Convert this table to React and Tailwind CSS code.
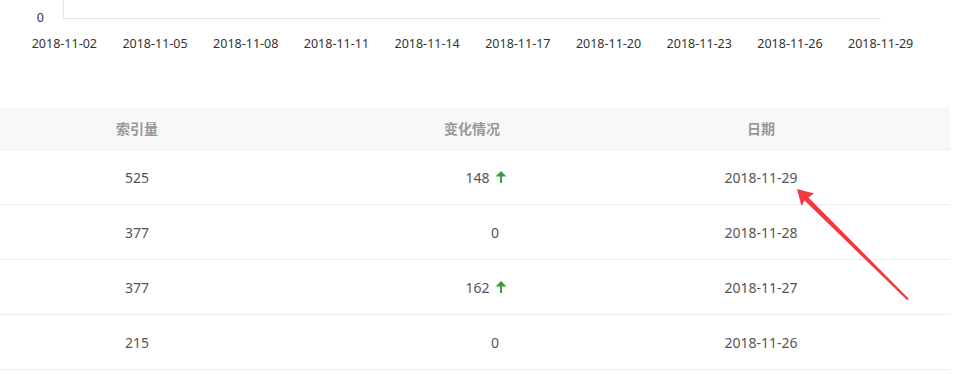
import React from 'react';

const ticks = ['2018-11-02', '2018-11-05', '2018-11-08', '2018-11-11', '2018-11-14', '2018-11-17', '2018-11-20', '2018-11-23', '2018-11-26', '2018-11-29'];

const rows = [
  { count: 525, change: '148', up: true, date: '2018-11-29' },
  { count: 377, change: '0', up: false, date: '2018-11-28' },
  { count: 377, change: '162', up: true, date: '2018-11-27' },
  { count: 215, change: '0', up: false, date: '2018-11-26' },
];

const UpArrow = () => (
  <svg width="12" height="12" viewBox="0 0 12 12" className="inline-block ml-[5px] -mt-[3px] align-middle">
    <path d="M6 0 L11.5 5.5 L7 5.5 L7 12 L5 12 L5 5.5 L0.5 5.5 Z" fill="#3d9a3d" />
  </svg>
);

export default function App() {
  return (
    <div className="relative w-[954px] h-[375px] bg-white overflow-hidden" style={{ fontFamily: '"Noto Sans", "Noto Sans CJK SC", sans-serif' }}>
      {/* chart bottom */}
      <div className="h-[108px]">
        <div className="flex items-end h-[19px]">
          <span className="w-[63px] pr-[19px] text-right text-[12.5px] leading-none text-[#333] translate-y-[5px]">0</span>
          <div className="w-[818px] h-[19px] border-l border-b border-[#e3e3e3]" />
        </div>
        <div className="grid grid-cols-10 w-[907px] ml-[19px] mt-[16px]">
          {ticks.map(t => (
            <span key={t} className="text-center text-[12.5px] leading-[18px] text-[#333]">{t}</span>
          ))}
        </div>
      </div>

      {/* table */}
      <div className="w-[950px] text-[14px]">
        <div className="grid grid-cols-[274px_396px_182px_1fr] h-[42px] items-center bg-[#f8f8f8] border-b border-[#ececec] font-bold text-[#999]">
          <div className="text-center">索引量</div>
          <div className="text-center">变化情况</div>
          <div className="text-center">日期</div>
          <div />
        </div>
        {rows.map((r, i) => (
          <div key={i} className="grid grid-cols-[274px_396px_182px_1fr] h-[55px] items-center border-b border-[#ececec] text-[#555]">
            <div className="text-center">{r.count}</div>
            <div className={r.up ? 'text-center pl-[28px]' : 'text-center pl-[46px]'}>
              {r.change}
              {r.up && <UpArrow />}
            </div>
            <div className="text-center">{r.date}</div>
            <div />
          </div>
        ))}
      </div>

      {/* red annotation arrow */}
      <svg className="absolute left-0 top-0 pointer-events-none" width="954" height="375">
        <polygon points="797,189 814,193.5 808.5,197.5 909,299 907,300 804.5,200.5 801.5,206" fill="#f5383b" />
      </svg>
    </div>
  );
}
